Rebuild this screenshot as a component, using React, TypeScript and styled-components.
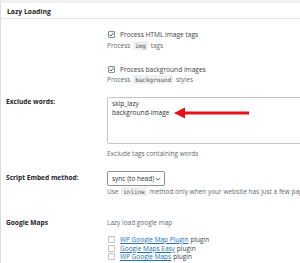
import React from 'react';
import styled, { createGlobalStyle } from 'styled-components';

const GlobalStyle = createGlobalStyle`
  html, body {
    margin: 0;
    padding: 0;
    background: #fff;
  }
  body {
    font-family: 'Open Sans', 'Noto Sans', sans-serif;
    color: #3c434a;
  }
`;

const Panel = styled.div`
  width: 300px;
  height: 263px;
  overflow: hidden;
  box-sizing: border-box;
  border-left: 1px solid #dcdcde;
  border-top: 3px solid #f0f0f1;
  background: #fff;
`;

const Header = styled.div`
  height: 16px;
  display: flex;
  align-items: center;
  padding-left: 6px;
  padding-top: 1px;
  box-sizing: border-box;
  font-size: 6.8px;
  font-weight: 700;
  color: #1d2327;
  border-bottom: 1px solid #e4e4e6;
`;

const Row = styled.div<{ pt?: number; h?: number }>`
  display: grid;
  grid-template-columns: 106px 1fr;
  padding-top: ${(p) => p.pt ?? 0}px;
  height: ${(p) => (p.h ? `${p.h}px` : 'auto')};
  box-sizing: border-box;
`;

const Label = styled.div<{ pt?: number }>`
  padding-left: 5px;
  padding-top: ${(p) => p.pt ?? 0}px;
  font-size: 6.6px;
  font-weight: 700;
  color: #1d2327;
  line-height: 10px;
`;

const Cell = styled.div`
  display: flex;
  flex-direction: column;
  min-width: 0;
`;

const Option = styled.div<{ mt?: number }>`
  display: flex;
  align-items: center;
  height: 9px;
  margin-top: ${(p) => p.mt ?? 0}px;
  font-size: 6.6px;
  color: #3c434a;
  white-space: nowrap;
`;

const Box = styled.span<{ checked?: boolean }>`
  width: 5px;
  height: 5px;
  border: 1px solid ${(p) => (p.checked ? '#8c8f94' : '#c3c4c7')};
  border-radius: 1px;
  background: #fff;
  box-shadow: inset 0 1px 1px rgba(0, 0, 0, 0.06);
  margin: 0 5px 0 1px;
  flex: none;
  display: flex;
  align-items: center;
  justify-content: center;
  svg {
    display: ${(p) => (p.checked ? 'block' : 'none')};
  }
`;

const Desc = styled.div<{ mt?: number }>`
  margin-top: ${(p) => p.mt ?? 0}px;
  height: 10px;
  line-height: 10px;
  font-size: 6.5px;
  color: #646970;
  white-space: nowrap;
`;

const Code = styled.code`
  font-family: 'DejaVu Sans Mono', monospace;
  font-size: 6px;
  background: #f0f0f1;
  padding: 1px 2px;
  margin: 0 1px;
  color: #50575e;
`;

const TextArea = styled.div`
  position: relative;
  height: 47px;
  box-sizing: border-box;
  margin-right: -10px;
  border: 1px solid #c3c4c7;
  border-radius: 2px;
  padding: 1px 4px;
  font-size: 6.6px;
  line-height: 9px;
  color: #2c3338;
`;

const Arrow = styled.svg`
  position: absolute;
  left: 66px;
  top: 9px;
`;

const Select = styled.div`
  width: 58px;
  height: 15px;
  box-sizing: border-box;
  border: 1px solid #8c8f94;
  border-radius: 2px;
  display: flex;
  align-items: center;
  justify-content: space-between;
  padding: 0 3px 0 4px;
  font-size: 6.5px;
  color: #2c3338;
  white-space: nowrap;
`;

const PluginList = styled.div`
  display: flex;
  flex-direction: column;
  margin-top: 7px;
`;

const PluginRow = styled.div`
  display: flex;
  align-items: center;
  height: 8.7px;
  font-size: 6.5px;
  color: #3c434a;
  white-space: nowrap;
`;

const Link = styled.a`
  color: #2271b1;
  text-decoration: underline;
  margin-right: 2px;
`;

const Check = () => (
  <svg width="5" height="5" viewBox="0 0 10 10">
    <path d="M1.2 5.2 L4 8 L9 1.6" fill="none" stroke="#2271b1" strokeWidth="2" />
  </svg>
);

const CheckOption: React.FC<{ label: string; mt?: number }> = ({ label, mt }) => (
  <Option mt={mt}>
    <Box checked>
      <Check />
    </Box>
    {label}
  </Option>
);

const plugins = ['WP Google Map Plugin', 'Google Maps Easy', 'WP Google Maps'];

export default function App() {
  return (
    <>
      <GlobalStyle />
      <Panel>
        <Header>Lazy Loading</Header>
        <Row pt={11} h={78}>
          <div />
          <Cell>
            <CheckOption label="Process HTML image tags" />
            <Desc mt={2}>
              Process <Code>img</Code> tags
            </Desc>
            <CheckOption label="Process background images" mt={14} />
            <Desc mt={1}>
              Process <Code>background</Code> styles
            </Desc>
          </Cell>
        </Row>
        <Row pt={0} h={74}>
          <Label pt={0}>Exclude words:</Label>
          <Cell>
            <TextArea>
              skip_lazy
              <br />
              background-image
              <Arrow width="80" height="12" viewBox="0 0 80 12">
                <polygon points="0,6 11,0.5 11,11.5" fill="#e8101a" />
                <rect x="10" y="4.5" width="65" height="3" fill="#e8101a" />
              </Arrow>
            </TextArea>
            <Desc mt={5}>Exclude tags containing words</Desc>
          </Cell>
        </Row>
        <Row pt={0} h={47}>
          <Label pt={2}>Script Embed method:</Label>
          <Cell>
            <Select>
              sync (to head)
              <svg width="6" height="4" viewBox="0 0 8 5">
                <path d="M1 1 L4 4 L7 1" fill="none" stroke="#50575e" strokeWidth="1.2" />
              </svg>
            </Select>
            <Desc mt={1}>
              Use <Code>inline</Code> method only when your website has just a few pages
            </Desc>
          </Cell>
        </Row>
        <Row pt={0}>
          <Label pt={0}>Google Maps</Label>
          <Cell>
            <Desc>Lazy load google map</Desc>
            <PluginList>
              {plugins.map((p) => (
                <PluginRow key={p}>
                  <Box />
                  <Link>{p}</Link>
                  plugin
                </PluginRow>
              ))}
            </PluginList>
          </Cell>
        </Row>
      </Panel>
    </>
  );
}
